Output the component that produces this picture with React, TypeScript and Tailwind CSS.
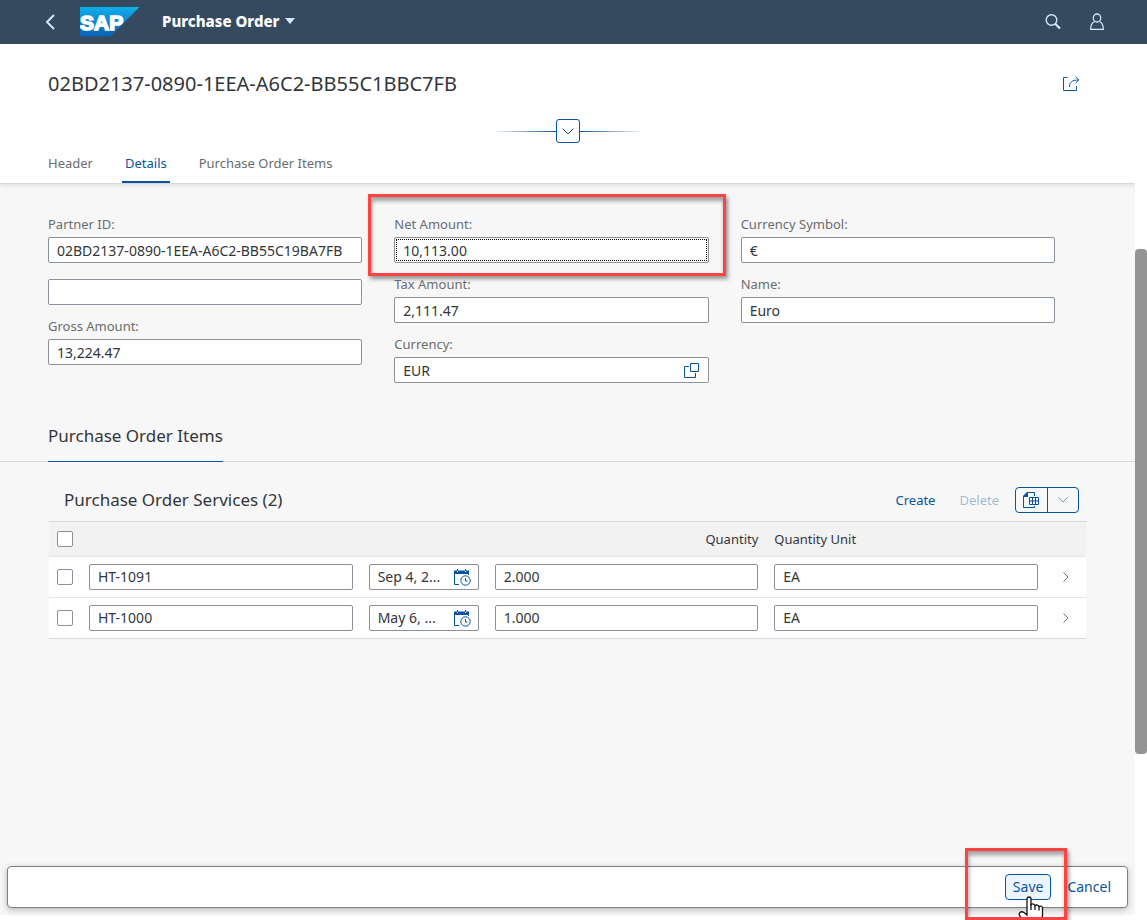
import React, { useState } from "react";

type FieldProps = {
  id: string;
  label?: string;
  defaultValue: string;
  focused?: boolean;
  children?: React.ReactNode;
};

const inputBase =
  "w-full h-[26px] px-2 bg-white border border-[#89919a] rounded-xs text-[14px] leading-[18px] text-[#32363a]";

const Field = ({ id, label, defaultValue, focused, children }: FieldProps) => (
  <div className="relative flex flex-col">
    {label && (
      <label htmlFor={id} className="text-[13px] leading-[18px] text-[#6a6d70]">
        {label}
      </label>
    )}
    <div className="relative mt-1">
      <input
        id={id}
        type="text"
        aria-label={label ? undefined : "Partner name"}
        defaultValue={defaultValue}
        className={inputBase}
      />
      {focused && (
        <div className="pointer-events-none absolute inset-0.5 border border-dotted border-black" />
      )}
      {children}
    </div>
    {focused && (
      <div className="pointer-events-none absolute -top-[21px] -bottom-[13px] -left-[26px] -right-[17px] border-3 border-[#ff4343] shadow-[2px_3px_4px_rgba(0,0,0,0.4),inset_1px_4px_4px_rgba(0,0,0,0.35)]" />
    )}
  </div>
);

const SapLogo = () => (
  <svg width="60" height="30" viewBox="0 0 60 30" aria-label="SAP">
    <defs>
      <linearGradient id="sap" x1="0" y1="0" x2="0" y2="1">
        <stop offset="0" stopColor="#10aeec" />
        <stop offset="1" stopColor="#0a62b4" />
      </linearGradient>
    </defs>
    <path d="M0 0H59.500L30.500 29.500H0Z" fill="url(#sap)" />
    <text
      x="0"
      y="23"
      fill="#fff"
      stroke="#fff"
      strokeWidth="1.600"
      fontFamily="Liberation Sans, sans-serif"
      fontWeight="700"
      fontSize="21"
    >
      SAP
    </text>
  </svg>
);

const CalendarIcon = () => (
  <svg width="17" height="17" viewBox="0 0 17 17" fill="none" stroke="#0854a0">
    <path d="M.5 4V15.500H5M14.500 4V6" />
    <path d="M0 1.500H3V0H4V1.500H11V0H12V1.500H15V5H0Z" fill="#0854a0" stroke="none" />
    <path d="M3 2.500H4M11 2.500H12" stroke="#fff" />
    <circle cx="11.500" cy="11.500" r="4.700" />
    <path d="M11.500 9V12H13.500" />
  </svg>
);

const ExportIcon = () => (
  <svg width="17" height="17" viewBox="0 0 17 17" fill="none" stroke="#0854a0">
    <path d="M4 .5H11.500V4M.5 4.500V15.500H11.500V14" />
    <path d="M0 5V4L4 0H5V5Z" fill="#0854a0" stroke="none" />
    <path d="M6.500 5.500H15.500V12.500H6.500ZM6.500 9H15.500M9.500 5.500V12.500M12.500 5.500V12.500" />
  </svg>
);

const HandCursor = () => (
  <svg width="28" height="30" viewBox="0 0 28 30" fill="#fff" stroke="#10101c" strokeWidth="1.300">
    <path d="M9 18V3C9 .3 13 .3 13 3V8.500C14.500 7.500 16.500 8 17 9.500C18.500 8.600 20.500 9 21 10.500C23 9.600 24.500 10.300 24.500 12V20L23 25V29H12L2.500 21C-.5 17.500 2.500 14.500 6 16.500L9 19Z" />
    <path d="M13 8V14M17 9.500V14M21 10.500V14.500" fill="none" />
  </svg>
);

const rows = [
  { id: "HT-1091", date: "Sep 4, 2...", quantity: "2.000", unit: "EA" },
  { id: "HT-1000", date: "May 6, ...", quantity: "1.000", unit: "EA" },
];

const checkbox =
  "block appearance-none size-4 bg-white border border-[#89919a] rounded-xs checked:bg-[#0854a0]";

const App = () => {
  const [tab, setTab] = useState("Details");

  return (
    <div className="min-h-screen flex flex-col bg-white font-['Noto_Sans',sans-serif] text-[13px] leading-[18px] text-[#32363a]">
      <header className="h-11 flex items-center pl-[44px] pr-[42px] bg-[#354a5f]">
        <button aria-label="Back" className="w-4">
          <svg width="12" height="16" viewBox="0 0 12 16" fill="none" stroke="#d1e8ff" strokeWidth="2">
            <path d="M10 1L3 8L10 15" />
          </svg>
        </button>
        <a href="#home" className="ml-5">
          <SapLogo />
        </a>
        <button className="ml-[22px] pb-0.5 flex items-center gap-1.5 text-[15px] font-extrabold text-white">
          Purchase Order
          <svg width="10" height="6" viewBox="0 0 10 6">
            <path d="M0 0H10L5 6Z" fill="#d1e8ff" />
          </svg>
        </button>
        <div className="ml-auto flex items-center gap-7">
          <button aria-label="Search">
            <svg width="16" height="16" viewBox="0 0 16 16" fill="none" stroke="#d1e8ff">
              <circle cx="6.500" cy="6" r="5.300" strokeWidth="1.400" />
              <path d="M10 9.500L15 14.500" strokeWidth="2.200" />
            </svg>
          </button>
          <button aria-label="User">
            <svg width="16" height="18" viewBox="0 0 16 18" fill="none" stroke="#d1e8ff" strokeWidth="1.300">
              <ellipse cx="8" cy="5" rx="3.700" ry="4" />
              <path d="M5.500 8.500C3 9.500 1.700 11 1.700 16.300H14.300C14.300 11 13 9.500 10.500 8.500" />
            </svg>
          </button>
        </div>
      </header>

      <div className="flex-1 flex">
        <main className="flex-1 flex flex-col mb-[5px] bg-[#f7f7f7]">
          <div className="bg-white border-b border-[#d9d9d9] shadow-[0_2px_4px_rgba(0,0,0,0.08)]">
            <div className="flex items-center justify-between pt-[26px] pl-12 pr-[55px]">
              <h1 className="text-[20px] leading-7">02BD2137-0890-1EEA-A6C2-BB55C1BBC7FB</h1>
              <button aria-label="Share">
                <svg width="18" height="16" viewBox="0 0 18 16" fill="none" stroke="#0854a0">
                  <path d="M5.500 1.500H1.500V14.500H14.500V10" />
                  <path d="M7.500 11C7.500 6 10 4 17 4M13.500 .8L16.800 4L13.500 7.200" />
                </svg>
              </button>
            </div>
            <div className="mt-[21px] flex justify-center items-center">
              <span className="w-16 h-px bg-linear-to-l from-[#0854a0] to-transparent" />
              <button
                aria-label="Expand header"
                className="size-6 flex items-center justify-center border border-[#0854a0] rounded-[3px]"
              >
                <svg width="12" height="7" viewBox="0 0 12 7" fill="none" stroke="#0854a0">
                  <path d="M.5 .5L6 6L11.500 .5" />
                </svg>
              </button>
              <span className="w-16 h-px bg-linear-to-r from-[#0854a0] to-transparent" />
            </div>
            <nav className="flex gap-[26px] pl-[45px]">
              {["Header", "Details", "Purchase Order Items"].map((name) => (
                <button
                  key={name}
                  onClick={() => setTab(name)}
                  className={
                    tab === name
                      ? "h-10 pt-0.5 px-[3px] border-b-2 border-[#0854a0] text-[#0854a0]"
                      : "h-10 pt-0.5 px-[3px] border-b-2 border-transparent text-[#6a6d70]"
                  }
                >
                  {name}
                </button>
              ))}
            </nav>
          </div>

          <section className="grid grid-cols-3 gap-8 items-start pt-[31px] pl-12 pr-20">
            <div className="flex flex-col gap-3">
              <Field id="partner" label="Partner ID:" defaultValue="02BD2137-0890-1EEA-A6C2-BB55C19BA7FB" />
              <Field id="partner-name" defaultValue="" />
              <Field id="gross" label="Gross Amount:" defaultValue="13,224.47" />
            </div>
            <div className="flex flex-col gap-3">
              <Field id="net" label="Net Amount:" defaultValue="10,113.00" focused />
              <Field id="tax" label="Tax Amount:" defaultValue="2,111.47" />
              <Field id="currency" label="Currency:" defaultValue="EUR">
                <button aria-label="Value help" className="absolute right-2.5 top-1.5">
                  <svg width="15" height="15" viewBox="0 0 15 15" fill="none" stroke="#0854a0">
                    <path d="M6.500 .5H14.500V8.500H6.500ZM5 3.500H.5V14.500H11.500V10" />
                  </svg>
                </button>
              </Field>
            </div>
            <div className="flex flex-col gap-3">
              <Field id="symbol" label="Currency Symbol:" defaultValue="€" />
              <Field id="name" label="Name:" defaultValue="Euro" />
            </div>
          </section>

          <section>
            <div className="mt-[41px] px-12 flex border-b border-[#d9d9d9]">
              <h2 className="-mb-px pb-[13px] border-b border-[#0854a0] text-[17px] leading-6">
                Purchase Order Items
              </h2>
            </div>

            <div className="mt-[21px] mx-12">
              <div className="h-[38px] pb-1 flex items-center pl-4 pr-2">
                <h3 className="text-[17px] leading-6">Purchase Order Services (2)</h3>
                <div className="ml-auto flex items-center gap-6 text-[#0854a0]">
                  <button>Create</button>
                  <button disabled className="text-[#0854a0]/40">
                    Delete
                  </button>
                </div>
                <div className="ml-4 flex h-[26px] border border-[#0854a0] rounded-sm">
                  <button aria-label="Export" className="w-[31px] flex items-center justify-center">
                    <ExportIcon />
                  </button>
                  <button
                    aria-label="Export options"
                    className="w-[31px] flex items-center justify-center border-l border-[#0854a0]"
                  >
                    <svg width="10" height="6" viewBox="0 0 10 6" fill="none" stroke="#7a93ad">
                      <path d="M.5 .5L5 5L9.500 .5" />
                    </svg>
                  </button>
                </div>
              </div>
              <div className="border-t border-[#d9d9d9] px-px">
                <table className="w-full table-fixed">
                  <thead>
                    <tr className="h-[34px] bg-[#f2f2f2] border-b border-[#e5e5e5]">
                      <th className="w-8 px-2">
                        <input type="checkbox" aria-label="Select all" className={checkbox} />
                      </th>
                      <th />
                      <th className="w-[126px]" />
                      <th className="px-2 text-right font-normal">Quantity</th>
                      <th className="px-2 text-left font-normal">Quantity Unit</th>
                      <th className="w-10" />
                    </tr>
                  </thead>
                  <tbody>
                    {rows.map((row) => (
                      <tr key={row.id} className="h-[41px] bg-white border-b border-[#e5e5e5] last:border-[#d9d9d9]">
                        <td className="px-2">
                          <input type="checkbox" aria-label={`Select ${row.id}`} className={checkbox} />
                        </td>
                        <td className="px-2">
                          <input type="text" aria-label="Product" defaultValue={row.id} className={inputBase} />
                        </td>
                        <td className="px-2">
                          <div className="relative">
                            <input type="text" aria-label="Date" defaultValue={row.date} className={inputBase} />
                            <button aria-label="Open calendar" className="absolute right-2 top-[5px]">
                              <CalendarIcon />
                            </button>
                          </div>
                        </td>
                        <td className="px-2">
                          <input type="text" aria-label="Quantity" defaultValue={row.quantity} className={inputBase} />
                        </td>
                        <td className="px-2">
                          <input type="text" aria-label="Quantity unit" defaultValue={row.unit} className={inputBase} />
                        </td>
                        <td>
                          <button aria-label="Open item" className="mx-auto block">
                            <svg width="6" height="10" viewBox="0 0 6 10" fill="none" stroke="#6a6d70">
                              <path d="M.5 .5L5 5L.5 9.500" />
                            </svg>
                          </button>
                        </td>
                      </tr>
                    ))}
                  </tbody>
                </table>
              </div>
            </div>
          </section>

          <footer className="mt-auto mx-[7px] mb-[7px] h-[42px] flex items-center justify-end gap-4 pr-4 bg-white border border-[#7f7f7f] rounded-[4px] shadow-[0_2px_6px_rgba(0,0,0,0.25)] text-[14px] text-[#0854a0]">
            <div className="relative">
              <button className="block h-[26px] px-[7px] bg-[#ebf5fe] border border-[#0854a0] rounded-sm">
                Save
              </button>
              <div className="pointer-events-none absolute -top-[26px] -bottom-[20px] -left-[40px] -right-[16px] overflow-hidden border-3 border-[#ff4343] shadow-[2px_3px_4px_rgba(0,0,0,0.4),inset_1px_4px_4px_rgba(0,0,0,0.35)]">
                <div className="absolute left-[50px] top-[45px]">
                  <HandCursor />
                </div>
              </div>
            </div>
            <button>Cancel</button>
          </footer>
        </main>

        {/* scrollbar */}
        <div className="w-3 flex flex-col bg-white">
          <div className="basis-0 grow-205" />
          <div className="basis-0 grow-505 rounded-sm bg-[#949494]" />
          <div className="basis-0 grow-166" />
        </div>
      </div>
    </div>
  );
};

export default App;
